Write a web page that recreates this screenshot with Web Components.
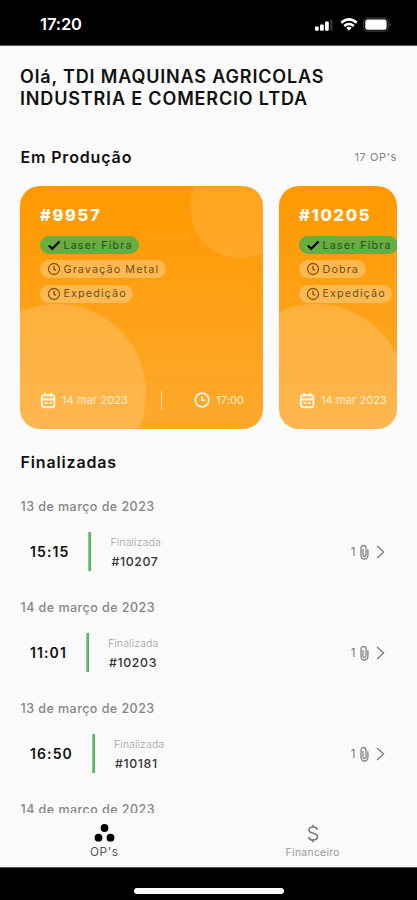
<!DOCTYPE html>
<html lang="pt-BR">
<head>
<meta charset="utf-8">
<title>Ordens de produção</title>
<style>
html,body{margin:0;height:100%;background:#fafafa}
body{font-family:Inter,"Liberation Sans",sans-serif;color:#111;overflow:hidden}
</style>
</head>
<body>
<op-app></op-app>
<script>
const define = (name, css, html) => customElements.define(name, class extends HTMLElement {
  constructor() {
    super();
    const t = document.createElement('template');
    t.innerHTML = `<style>*{box-sizing:border-box}svg{display:block;flex:none}${css}</style>` +
      (typeof html === 'function' ? html(k => this.getAttribute(k) || '') : html);
    this.attachShadow({ mode: 'open' }).append(t.content.cloneNode(true));
  }
});

define('status-bar', `
:host{display:flex;height:46px;background:#000;color:#fff;padding:2px 26px 0 40px;align-items:center;justify-content:space-between;border-bottom:1px solid #555}
b{font-size:16.5px;font-weight:600;letter-spacing:-.1px}`, `
<b>17:20</b>
<svg width="78" height="18" viewBox="0 0 78 18">
 <g fill="#fff"><rect x="2" y="11.500" width="3.8" height="4.300" rx="1"/><rect x="7" y="9.500" width="3.8" height="6.300" rx="1"/><rect x="12" y="6.500" width="3.8" height="9.300" rx="1"/></g>
 <rect x="17.200" y="4.500" width="2.200" height="11.300" rx="1" fill="#3a3a3a"/>
 <g fill="none" stroke="#fff" stroke-width="2.500"><path d="M28.300 7.800Q36 1 43.700 7.800"/><path d="M31.200 11Q36 7 40.800 11"/></g>
 <path d="M33.300 12.800Q36 10.800 38.700 12.800L36 15.800Z" fill="#fff"/>
 <rect x="50.700" y="3.200" width="24.500" height="13" rx="4" fill="none" stroke="#3c3c3c" stroke-width="1.200"/>
 <rect x="52.300" y="4.600" width="21.300" height="10.200" rx="2.300" fill="#fff"/><path d="M76.500 7.500v4q1.300-.5 1.300-2t-1.300-2" fill="#555"/>
</svg>`);

define('section-head', `
:host{display:flex;justify-content:space-between;align-items:center;height:20px}
h2{margin:0 0 0 .5px;font-size:16px;line-height:20px;font-weight:600;letter-spacing:.85px}
span{font-size:11px;color:#85858a;letter-spacing:.6px}`, a => `<h2><slot></slot></h2>${a('count') && `<span>${a('count')}</span>`}`);

const clock = `<circle cx="8" cy="8" r="6.300"/><path d="M8 4.300V8.300L10.500 9.500"/>`;
define('step-chip', `
:host{display:flex;align-items:center;width:max-content;height:18px;border-radius:9px;background:rgba(255,255,255,.27);padding:0 6.500px 0 7px;gap:3px;font-size:10.800px;letter-spacing:1.100px;color:rgba(45,25,0,.72);white-space:nowrap}
:host([state=done]){background:#67ad40;color:#24501a}`, a => (a('state') === 'done'
 ? `<svg width="14" height="14" viewBox="0 0 16 16" fill="none" stroke="#000" stroke-width="2.500"><path d="M2 8.500L6 12.300L14.300 4"/></svg>`
 : `<svg width="14" height="14" viewBox="0 0 16 16" fill="none" stroke="#86500b" stroke-width="1.500">${clock}</svg>`) + `<slot></slot>`);

define('op-card', `
:host{display:block;flex:none;width:var(--w,243px);height:243px;border-radius:20px;overflow:hidden;background:
 radial-gradient(circle at 37px 207px,rgba(255,255,255,.16) 88.500px,transparent 89.500px),
 radial-gradient(circle at 221px 21px,rgba(255,255,255,.11) 50.500px,transparent 51.500px),
 linear-gradient(#ff9900,#fda92d)}
.in{width:243px;height:243px;padding:19px 19px 18px 19px;display:flex;flex-direction:column;color:#fff}
h3{margin:0 0 10px 1px;font-size:16.500px;line-height:21px;font-weight:800;letter-spacing:1.650px}
.steps{display:flex;flex-direction:column;gap:6.300px;padding-left:.5px}
.foot{margin-top:auto;display:flex;align-items:center;height:22px;padding-left:1px;font-size:11px;letter-spacing:.1px;color:#ffedd0}
.foot span{margin-left:6px}.foot i{width:1.500px;height:19px;background:#ffe0b0;margin:0 32px 0 auto}`, a => `
<div class="in"><h3>${a('op')}</h3><div class="steps"><slot></slot></div>
<div class="foot">
<svg width="16" height="17" viewBox="0 0 16 17" fill="none" stroke="#fff6e6" stroke-width="1.900"><rect x="1.800" y="3.200" width="12.600" height="12" rx="2.400"/><path d="M2 7.300H14.200" stroke-width="2.300"/><path d="M5 .8V4.500M11.200 .8V4.500" stroke-width="1.900"/><path d="M4.500 11.200h3M9 11.200h2.800" stroke-width="1.700"/></svg>
<span>${a('date')}</span>${a('time') && `<i></i>
<svg width="16" height="16" viewBox="0 0 16 16" fill="none" stroke="#fff6e6" stroke-width="1.800"><circle cx="8" cy="8" r="6.800"/><path d="M8 4.500V8.300H11"/></svg>
<span>${a('time')}</span>`}</div></div>`);

define('op-row', `
:host{display:block;margin-bottom:28px}
.d{font-size:12.500px;line-height:16px;font-weight:500;color:#858589;letter-spacing:.46px;padding-left:.5px}
.r{display:flex;align-items:center;height:40px;margin-top:17px;padding:0 12px 0 10px}
.t{font-size:14px;font-weight:600;letter-spacing:1.100px}
i{width:3px;height:39px;background:linear-gradient(90deg,#8fd196,#42ad4c);margin:0 19px 0 19px}
.c{display:flex;flex-direction:column;line-height:19px;font-size:12.300px;font-weight:500;letter-spacing:.65px;color:#333}
.c span{margin-left:1px}
.c small{font-size:10.700px;font-weight:300;color:#a4a4a4;letter-spacing:.05px}
.e{margin-left:auto;display:flex;align-items:center;font-size:11.500px;color:#777}`, a => `
<div class="d">${a('date')}</div>${a('op') && `<div class="r"><span class="t">${a('time')}</span><i></i>
<div class="c"><small>Finalizada</small><span>${a('op')}</span></div>
<div class="e">1<svg style="margin:0 6px 0 3.500px" width="11" height="18" viewBox="0 0 11 18" fill="none" stroke="#8b8b8b" stroke-width="1.400"><path d="M2 5V12.500a3.400 3.400 0 0 0 6.900 0V6.300M2 5a2.500 2.500 0 0 1 5 0V12a1.500 1.500 0 0 1-3 0V6"/></svg>
<svg width="9" height="14" viewBox="0 0 9 14" fill="none" stroke="#808080" stroke-width="1.400"><path d="M1 1L7.600 7L1 13"/></svg></div></div>`}`);

define('tab-item', `
:host{flex:1;display:flex;flex-direction:column;align-items:center;font-size:11.800px;line-height:17px;letter-spacing:.5px;color:#555}
:host([idle]){color:#999;font-size:10.300px;letter-spacing:.35px}
.i{height:22px;display:flex;align-items:center}`, `<div class="i"><slot name="icon"></slot></div><slot></slot>`);

define('home-bar', `
:host{display:flex;height:33px;background:#000;justify-content:center;padding-top:20px;border-top:1px solid #555}
i{width:150px;height:6px;border-radius:3px;background:#fff}`, `<i></i>`);

define('op-app', `
:host{display:flex;flex-direction:column;height:900px;width:417px;background:#fafafa}
main{flex:1;min-height:0;overflow:hidden;padding:20px 20px 0}
h1{margin:0 0 38px;font-size:18px;line-height:21.500px;font-weight:600;letter-spacing:.84px;white-space:nowrap}
.cards{display:flex;gap:16px;margin:19px 0 22.500px;overflow:hidden}
.list{margin-top:27px}
nav{display:flex;height:54px;padding-top:9px;background:#fafafa}`, `
<status-bar></status-bar>
<main>
<h1>Olá, TDI MAQUINAS AGRICOLAS<br>INDUSTRIA E COMERCIO LTDA</h1>
<section-head count="17 OP's">Em Produção</section-head>
<div class="cards">
<op-card op="#9957" date="14 mar 2023" time="17:00"><step-chip state="done">Laser Fibra</step-chip><step-chip>Gravação Metal</step-chip><step-chip>Expedição</step-chip></op-card>
<op-card style="--w:118px" op="#10205" date="14 mar 2023"><step-chip state="done">Laser Fibra</step-chip><step-chip>Dobra</step-chip><step-chip>Expedição</step-chip></op-card>
</div>
<section-head>Finalizadas</section-head>
<div class="list">
<op-row date="13 de março de 2023" time="15:15" op="#10207"></op-row>
<op-row date="14 de março de 2023" time="11:01" op="#10203"></op-row>
<op-row date="13 de março de 2023" time="16:50" op="#10181"></op-row>
<op-row date="14 de março de 2023"></op-row>
</div>
</main>
<nav>
<tab-item><svg slot="icon" width="22" height="20" viewBox="0 0 22 20"><circle cx="11.500" cy="5" r="3.900"/><circle cx="5.500" cy="14.700" r="3.900"/><circle cx="17.500" cy="14.700" r="3.900"/></svg>OP's</tab-item>
<tab-item idle><svg slot="icon" width="12" height="19" viewBox="0 0 12 19" fill="none" stroke="#777" stroke-width="1.600"><path d="M6 .8V3M6 16V18.200M10.300 5.700C9.800 3.800 8.200 3 6 3C3.600 3 2 4.200 2 6C2 10.300 10.500 8.300 10.500 12.800C10.500 14.700 8.600 16 6 16C3.500 16 1.900 15 1.500 13"/></svg>Financeiro</tab-item>
</nav>
<home-bar></home-bar>`);
</script>
</body>
</html>
